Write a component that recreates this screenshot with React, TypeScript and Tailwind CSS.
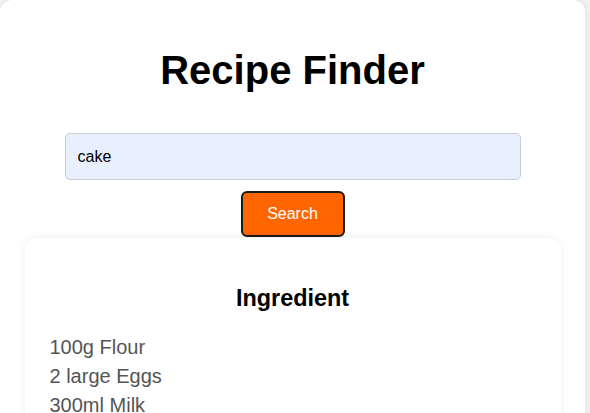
import React, { useState } from 'react';

const ingredients = ['100g Flour', '2 large Eggs', '300ml Milk'];

const App: React.FC = () => {
  const [query, setQuery] = useState('cake');

  return (
    <div className="min-h-screen bg-[#f0f0f0] font-['Liberation_Sans',Arial,sans-serif]">
      <div className="w-[585px] min-h-[413px] bg-white rounded-xl shadow-[0_0_4px_rgba(0,0,0,0.08)] pt-[47px] flex flex-col items-center">
        <h1 className="text-[40px] leading-[46px] font-bold text-black">Recipe Finder</h1>
        <input
          value={query}
          onChange={(e) => setQuery(e.target.value)}
          className="mt-[40px] w-[456px] h-[47px] px-[12px] bg-[#e8f0fe] border border-[#c8ccd6] rounded-[5px] text-[16px] text-black outline-none"
        />
        <button className="mt-[11px] w-[104px] h-[46px] bg-[#ff6600] border-2 border-[#1a1a1a] rounded-[6px] text-white text-[16px]">
          Search
        </button>
        <div className="mt-[1px] w-[536px] bg-white rounded-xl shadow-[0_0_10px_rgba(0,0,0,0.07)] pt-[47px] px-[25px] pb-6">
          <h3 className="text-center text-[23.4px] leading-[27px] font-bold text-black">Ingredient</h3>
          <ul className="mt-[21px] text-[20px] leading-[29px] text-[#555]">
            {ingredients.map((item) => (
              <li key={item}>{item}</li>
            ))}
          </ul>
        </div>
      </div>
    </div>
  );
};

export default App;
